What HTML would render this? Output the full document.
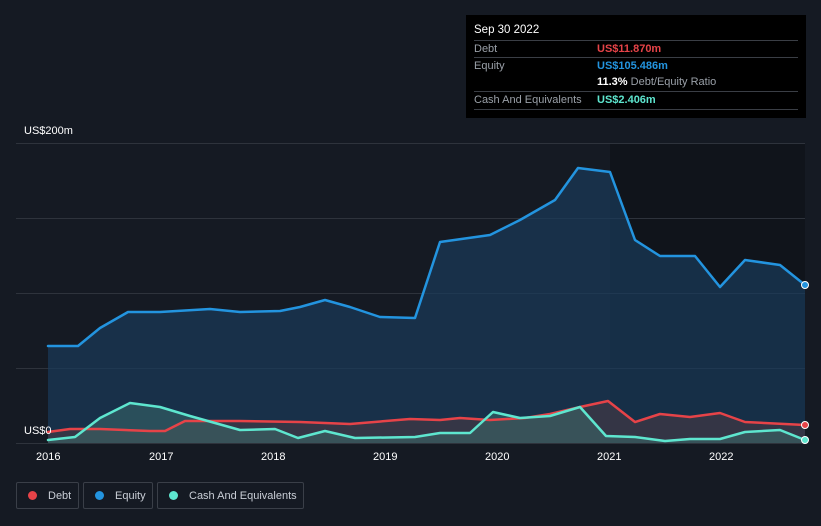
<!DOCTYPE html>
<html><head><meta charset="utf-8"><style>
body{margin:0;background:#151a23;width:821px;height:526px;overflow:hidden;font-family:"Liberation Sans",sans-serif;position:relative}
.tt{position:absolute;left:466px;top:15px;width:340px;height:103px;background:#000;color:#fff;font-size:11px}
.tt .r{position:absolute;left:8px;right:8px;border-top:1px solid #3a3e45;height:17px;line-height:17px}
.lbl{color:#9aa0a8}
.leg{position:absolute;top:482px;height:27px;border:1px solid #3a3f48;border-radius:2px;color:#c9ced6;font-size:11px;line-height:27px;box-sizing:border-box}
.leg i{display:inline-block;width:9px;height:9px;border-radius:50%;margin:0 11px 0 11px;vertical-align:-1px}
.ax{position:absolute;color:#fff;font-size:11px}
</style></head><body>
<svg width="821" height="526" style="position:absolute;left:0;top:0">
<rect x="610" y="143" width="195" height="300" fill="#10141b"/>
<g stroke="#2e333c" stroke-width="1">
<line x1="16" y1="143.5" x2="805" y2="143.5"/><line x1="16" y1="218.5" x2="805" y2="218.5"/>
<line x1="16" y1="293.5" x2="805" y2="293.5"/><line x1="16" y1="368.5" x2="805" y2="368.5"/>
<line x1="16" y1="443.5" x2="805" y2="443.5"/></g>
<polygon fill="#1a3a5a" fill-opacity="0.7" points="48,443 48,346 78,346 100,328 128,312 160,312 210,309 240,312 280,311 300,307 325,300 350,307 380,317 415,318 440,242 490,235 520,220 555,200 578,168 610,172 635,240 660,256 695,256 720,287 745,260 780,265 805,285 805,443"/>
<polygon fill="#4a3a45" fill-opacity="0.6" points="48,443 48,432 70,429 100,429 150,431 165,431 185,421 240,421 300,422 350,424 410,419 440,420 460,418 490,420 525,418 550,414 580,407 608,401 635,422 660,414 690,417 720,413 745,422 805,425 805,443"/>
<polygon fill="#3a6a6a" fill-opacity="0.55" points="48,443 48,440 75,437 100,418 130,403 160,407 190,416 240,430 275,429 298,438 325,431 355,438 415,437 440,433 470,433 493,412 520,418 550,416 580,407 606,436 635,437 665,441 690,439 720,439 745,432 780,430 805,440 805,443"/>
<g fill="none" stroke-width="2.5" stroke-linejoin="round" stroke-linecap="round">
<polyline stroke="#2394df" points="48,346 78,346 100,328 128,312 160,312 210,309 240,312 280,311 300,307 325,300 350,307 380,317 415,318 440,242 490,235 520,220 555,200 578,168 610,172 635,240 660,256 695,256 720,287 745,260 780,265 805,285"/>
<polyline stroke="#e64348" points="48,432 70,429 100,429 150,431 165,431 185,421 240,421 300,422 350,424 410,419 440,420 460,418 490,420 525,418 550,414 580,407 608,401 635,422 660,414 690,417 720,413 745,422 805,425"/>
<polyline stroke="#5ee6cf" points="48,440 75,437 100,418 130,403 160,407 190,416 240,430 275,429 298,438 325,431 355,438 415,437 440,433 470,433 493,412 520,418 550,416 580,407 606,436 635,437 665,441 690,439 720,439 745,432 780,430 805,440"/>
</g>
<circle cx="805" cy="285" r="3.5" fill="#2394df" stroke="#fff" stroke-width="1"/>
<circle cx="805" cy="425" r="3.5" fill="#e64348" stroke="#fff" stroke-width="1"/>
<circle cx="805" cy="440" r="3.5" fill="#5ee6cf" stroke="#fff" stroke-width="1"/>
</svg>
<div class="ax" style="left:24px;top:125px">US$200m</div>
<div class="ax" style="left:24px;top:425px">US$0</div>
<div class="ax" style="left:36px;top:451px">2016</div>
<div class="ax" style="left:149px;top:451px">2017</div>
<div class="ax" style="left:261px;top:451px">2018</div>
<div class="ax" style="left:373px;top:451px">2019</div>
<div class="ax" style="left:485px;top:451px">2020</div>
<div class="ax" style="left:597px;top:451px">2021</div>
<div class="ax" style="left:709px;top:451px">2022</div>
<div class="tt">
<div style="position:absolute;left:8px;top:9px;font-size:11.5px">Sep 30 2022</div>
<div class="r" style="top:25px"><span class="lbl">Debt</span><span style="position:absolute;left:123px;color:#e64348;font-weight:bold">US$11.870m</span></div>
<div class="r" style="top:42px"><span class="lbl">Equity</span><span style="position:absolute;left:123px;color:#2394df;font-weight:bold">US$105.486m</span></div>
<div style="position:absolute;left:131px;top:61px"><b>11.3%</b> <span class="lbl">Debt/Equity Ratio</span></div>
<div class="r" style="top:76px"><span class="lbl">Cash And Equivalents</span><span style="position:absolute;left:123px;color:#5ee6cf;font-weight:bold">US$2.406m</span></div>
<div class="r" style="top:94px;height:0"></div>
</div>
<div class="leg" style="left:16px;width:63px"><i style="background:#e64348"></i>Debt</div>
<div class="leg" style="left:83px;width:70px"><i style="background:#2394df"></i>Equity</div>
<div class="leg" style="left:157px;width:147px"><i style="background:#5ee6cf"></i>Cash And Equivalents</div>
</body></html>
